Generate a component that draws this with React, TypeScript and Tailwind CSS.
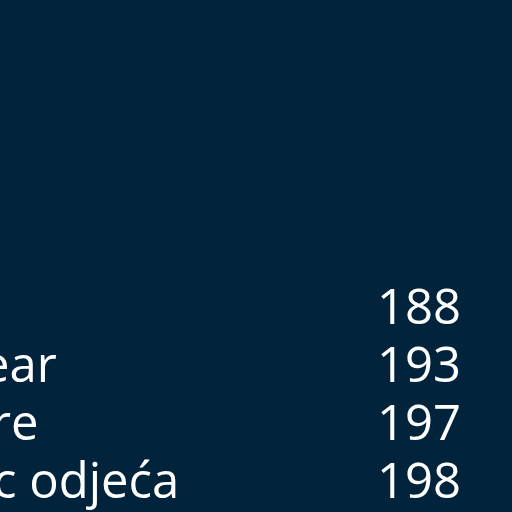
const rows = [
  { label: "", labelClass: "ml-0", page: "188" },
  { label: "ear", labelClass: "-ml-[18px]", page: "193" },
  { label: "ure", labelClass: "-ml-[39px]", page: "197" },
  { label: "c odjeća", labelClass: "-ml-[7px]", page: "198" },
];

export default function App() {
  return (
    <div className="w-[512px] h-[512px] overflow-hidden bg-[#01243c] text-white font-['Open_Sans',sans-serif]">
      {/* Table of contents */}
      <ul className="pt-[276px] pr-[51px] flex flex-col">
        {rows.map((r) => (
          <li key={r.page} className="flex items-center justify-between h-[58px] text-[49px] leading-[58px]">
            <span className={`whitespace-nowrap ${r.labelClass}`}>{r.label}</span>
            <span>{r.page}</span>
          </li>
        ))}
      </ul>
    </div>
  );
}
